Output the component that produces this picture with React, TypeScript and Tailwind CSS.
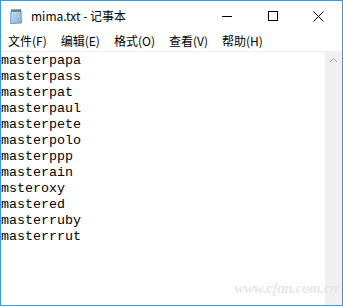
import React from "react";

const lines = [
  "masterpapa",
  "masterpass",
  "masterpat",
  "masterpaul",
  "masterpete",
  "masterpolo",
  "masterppp",
  "masterain",
  "msteroxy",
  "mastered",
  "masterruby",
  "masterrrut",
];

const menus = ["文件(F)", "编辑(E)", "格式(O)", "查看(V)", "帮助(H)"];

function NotepadIcon() {
  return (
    <svg width="16" height="16" viewBox="0 0 16 16">
      <defs>
        <linearGradient id="pg" x1="0" y1="0" x2="1" y2="1">
          <stop offset="0" stopColor="#cfe6f7" />
          <stop offset="1" stopColor="#7fb2d9" />
        </linearGradient>
      </defs>
      <path d="M3 3 L13 2.5 L13.5 15 L2.5 15.5 Z" fill="url(#pg)" stroke="#5c87a8" strokeWidth="0.8" />
      <path d="M4.5 7 H11.5 M4.5 9.5 H11.5 M4.5 12 H11" stroke="#9cc3e0" strokeWidth="0.8" />
      <path d="M4 1 v3 M6 1 v3 M8 1 v3 M10 1 v3 M12 1 v3" stroke="#3a4a5a" strokeWidth="1" />
    </svg>
  );
}

export default function App() {
  return (
    <div className="w-[343px] h-[306px] border border-[#3c9ade] bg-white flex flex-col overflow-hidden relative" style={{ fontFamily: '"Noto Sans CJK SC", "Noto Sans", sans-serif' }}>
      <div className="h-[30px] flex items-center shrink-0">
        <div className="pl-[7px] pr-[7px] flex items-center">
          <NotepadIcon />
        </div>
        <div className="text-[12px] text-black flex-1 leading-none">mima.txt - 记事本</div>
        <div className="flex h-full">
          <div className="w-[46px] h-full flex items-center justify-center">
            <div className="w-[10px] h-px bg-black" />
          </div>
          <div className="w-[46px] h-full flex items-center justify-center">
            <div className="w-[10px] h-[10px] border border-black" />
          </div>
          <div className="w-[46px] h-full flex items-center justify-center pr-[2px]">
            <svg width="11" height="11" viewBox="0 0 11 11">
              <path d="M0.5 0.5 L10.5 10.5 M10.5 0.5 L0.5 10.5" stroke="#000" strokeWidth="1" />
            </svg>
          </div>
        </div>
      </div>
      <div className="h-[20px] flex items-center shrink-0 pl-[7px] gap-[14px] text-[12px] text-black leading-none">
        {menus.map((m) => (
          <span key={m}>{m}</span>
        ))}
      </div>
      <div className="flex-1 flex border-t border-[#f0f0f0] min-h-0">
        <div className="flex-1 pt-[1px]" style={{ fontFamily: '"Liberation Mono", "DejaVu Sans Mono", monospace' }}>
          {lines.map((l) => (
            <div key={l} className="text-[13.33px] leading-[16px] text-black">
              {l}
            </div>
          ))}
        </div>
        <div className="w-[17px] bg-[#f0f0f0] flex flex-col items-center">
          <svg width="17" height="17" viewBox="0 0 17 17">
            <path d="M5 10 L8.5 6.5 L12 10" stroke="#a3a3a3" strokeWidth="1" fill="none" />
          </svg>
        </div>
      </div>
      <div className="absolute right-[4px] bottom-[6px] text-[15px] italic font-bold text-[#e8e8e8] tracking-tight" style={{ fontFamily: '"Liberation Serif", serif' }}>
        www.cfan.com.cn
      </div>
    </div>
  );
}
